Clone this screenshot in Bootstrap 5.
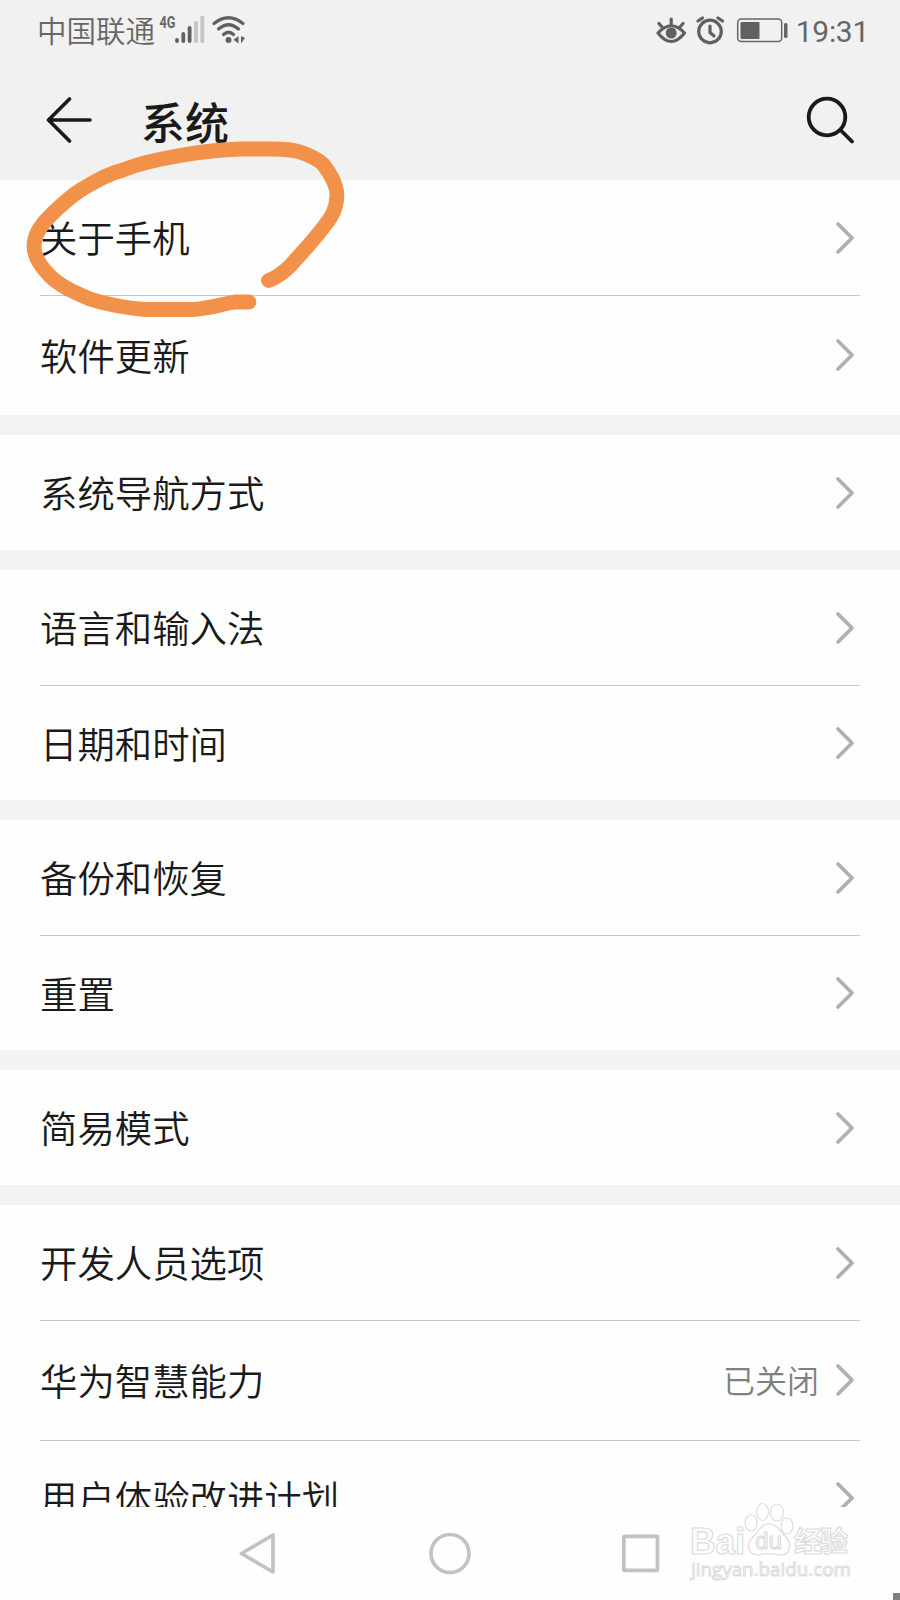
<!DOCTYPE html>
<html lang="zh-CN">
<head>
<meta charset="utf-8">
<meta name="viewport" content="width=device-width, initial-scale=1">
<title>系统</title>
<link href="https://cdn.jsdelivr.net/npm/bootstrap@5.3.0/dist/css/bootstrap.min.css" rel="stylesheet">
<style>
body{font-family:"Noto Sans CJK SC",sans-serif;background:#fefefe;color:#1a1a1a;width:900px;height:1600px;overflow:hidden}
svg{display:block;flex:none}
.top-area{height:180px;background:#f1f1f1}
.status-bar{height:62px;padding:0 31px 0 37px;color:#666}
.carrier{font-size:29.5px;font-weight:350;height:62px;line-height:59px}
.clock{font-family:Roboto,sans-serif;font-size:30px;line-height:62px;letter-spacing:-.3px;padding-top:1px}
.title-bar{height:118px;padding:0 46px 2px}
.title-text{font-size:44px;font-weight:500;line-height:60px;margin:1px 0 0 48px}
.settings{height:1327px;overflow:hidden}
.group-gap{height:20px;background:#f3f3f3}
.set-row{height:115px;margin:0 40px;padding-right:5px;font-size:37.4px;font-weight:350;line-height:54px}
.set-row>span{padding-bottom:1px}
.set-row+.set-row{border-top:1px solid #c8c8c8}
.set-row.tall{height:120px}
.set-row.tall svg{margin-bottom:2px}
.set-row.last-row>span{padding-bottom:3px}
.set-row .state{font-size:32px;color:#808080;margin-right:16px;padding-bottom:3px}
.nav-keys{height:93px}
.pen-mark{left:0;top:120px}
.watermark{left:680px;top:1496px}
.corner{right:0;bottom:0;width:7px;height:7px;background:#808080}
</style>
</head>
<body class="position-relative">
<svg width="0" height="0" class="position-absolute"><symbol id="chev" viewBox="0 0 20 34"><path d="M3 3 17 17 3 31" fill="none" stroke="#b0b0b0" stroke-width="3.800" stroke-linecap="round" stroke-linejoin="round"/></symbol></svg>
<header class="top-area">
  <div class="status-bar d-flex align-items-center justify-content-between">
    <div class="d-flex align-items-center">
      <span class="carrier">中国联通</span>
      <svg width="92" height="62" viewBox="155 0 92 62">
        <text x="159.500" y="28" font-family="Roboto" font-weight="700" font-size="16" textLength="16" lengthAdjust="spacingAndGlyphs" fill="#666">4G</text>
        <g stroke="#606060" stroke-width="3.800" stroke-linecap="round"><path d="M177 40v1M183.300 34v7M189.600 28v13"/><path d="M196 23v18M202.300 17.500v23.500" stroke="#c4c4c4"/></g>
        <g fill="none" stroke="#606060" stroke-width="3.200" stroke-linecap="round"><path d="M214 23.500Q228.500 12 243 23.500M218.500 29Q228.500 20.500 238.500 29M223.500 34.500Q228.500 30 233.500 34.500"/></g>
        <circle cx="228.500" cy="40" r="3" fill="#606060"/><path d="M238.500 36v7.500l-5-3.800zM241 36v7.500l4-5.500z" fill="#606060"/>
      </svg>
    </div>
    <div class="d-flex align-items-center">
      <svg width="140" height="62" viewBox="655.500 0 140 62">
        <g fill="none" stroke="#606060" stroke-width="3.200" stroke-linecap="round" stroke-linejoin="round"><path d="M657.500 33Q670.700 18.500 684 33Q670.700 50 657.500 33zM658.500 23.500l3 3.500M670.700 19v5M682.500 23.500l-3 3.500"/><circle cx="709.500" cy="31.500" r="11.300"/><path d="M709.500 26v6.500l4 3.500M697.500 21l4.500-3M717.500 18l4.500 3"/></g>
        <circle cx="670.700" cy="33" r="5.500" fill="#606060"/>
        <rect x="737.200" y="19" width="44" height="22.500" rx="3.500" fill="none" stroke="#666" stroke-width="1.500"/><rect x="740" y="22" width="19" height="17" rx="1" fill="#606060"/><rect x="783.500" y="23" width="3.500" height="15" rx="1.500" fill="#666"/>
      </svg>
      <span class="clock">19:31</span>
    </div>
  </div>
  <div class="title-bar d-flex align-items-center">
    <svg width="47" height="48" viewBox="46 96 47 48"><path d="M69.500 99 48.500 120 69.500 141M49 120H90" fill="none" stroke="#1a1a1a" stroke-width="3.600" stroke-linecap="round" stroke-linejoin="round"/></svg>
    <h1 class="title-text">系统</h1>
    <svg class="ms-auto" width="49" height="50" viewBox="805 95 49 50"><g fill="none" stroke="#1a1a1a" stroke-width="3.800" stroke-linecap="round"><circle cx="827" cy="117" r="18.300"/><path d="M840.500 130 852 141.500"/></g></svg>
  </div>
</header>
<main class="settings">
  <section>
    <div class="set-row d-flex align-items-center justify-content-between"><span>关于手机</span><svg width="20" height="34"><use href="#chev"/></svg></div>
    <div class="set-row tall d-flex align-items-center justify-content-between"><span>软件更新</span><svg width="20" height="34"><use href="#chev"/></svg></div>
  </section>
  <div class="group-gap"></div>
  <section>
    <div class="set-row d-flex align-items-center justify-content-between"><span>系统导航方式</span><svg width="20" height="34"><use href="#chev"/></svg></div>
  </section>
  <div class="group-gap"></div>
  <section>
    <div class="set-row d-flex align-items-center justify-content-between"><span>语言和输入法</span><svg width="20" height="34"><use href="#chev"/></svg></div>
    <div class="set-row d-flex align-items-center justify-content-between"><span>日期和时间</span><svg width="20" height="34"><use href="#chev"/></svg></div>
  </section>
  <div class="group-gap"></div>
  <section>
    <div class="set-row d-flex align-items-center justify-content-between"><span>备份和恢复</span><svg width="20" height="34"><use href="#chev"/></svg></div>
    <div class="set-row d-flex align-items-center justify-content-between"><span>重置</span><svg width="20" height="34"><use href="#chev"/></svg></div>
  </section>
  <div class="group-gap"></div>
  <section>
    <div class="set-row d-flex align-items-center justify-content-between"><span>简易模式</span><svg width="20" height="34"><use href="#chev"/></svg></div>
  </section>
  <div class="group-gap"></div>
  <section>
    <div class="set-row d-flex align-items-center justify-content-between"><span>开发人员选项</span><svg width="20" height="34"><use href="#chev"/></svg></div>
    <div class="set-row tall d-flex align-items-center"><span>华为智慧能力</span><span class="state ms-auto">已关闭</span><svg width="20" height="34"><use href="#chev"/></svg></div>
    <div class="set-row last-row d-flex align-items-center justify-content-between"><span>用户体验改进计划</span><svg width="20" height="34"><use href="#chev"/></svg></div>
  </section>
</main>
<nav class="nav-keys">
  <svg width="900" height="93" viewBox="0 1507 900 93" fill="none" stroke="#c2c2c2" stroke-width="3.700" stroke-linejoin="round"><path d="M241.500 1553.500 273 1535V1572z"/><circle cx="450" cy="1553.500" r="19"/><rect x="623.800" y="1536.300" width="33.700" height="34" rx="1"/></svg>
</nav>
<svg class="pen-mark position-absolute" width="360" height="210" viewBox="0 120 360 210"><path d="M268.500 280.500C276 278 283 273 290 266L308 246C318 234 329 222 333 213C337 204 338 197 336 188C334 180 329 172 323 164C316 158 309 155 300 152C292 149.500 284 149 272 149H240C220 149.500 200 152 180 155.500C160 159 140 163 123 170C108 174 98 180 84 188C70 196 58 208 49 217C39 227 34 238 34 246C34 257 42 268 50 276C60 286 74 292 90 299C106 304 126 308 145 309.500H192C208 309 222 304 235 302H249" fill="none" stroke="#f1914a" stroke-width="14.800" stroke-linecap="round" stroke-linejoin="round"/></svg>
<svg class="watermark position-absolute" width="180" height="90" viewBox="680 1496 180 90" fill="#fefefe" stroke="#dcdcdc" stroke-width="1.200">
  <text x="690" y="1554" font-size="36" font-family="Liberation Sans" font-weight="700" textLength="55" lengthAdjust="spacingAndGlyphs">Bai</text><text x="794" y="1552" font-size="28" font-family="Noto Sans CJK SC" font-weight="700" textLength="54">经验</text>
  <ellipse cx="751" cy="1523" rx="6" ry="8"/><ellipse cx="762.500" cy="1512" rx="6" ry="8.500"/><ellipse cx="777" cy="1512.500" rx="6.500" ry="8.500"/><ellipse cx="787" cy="1526" rx="6" ry="8"/>
  <path d="M769 1524C760 1524 759 1532 753 1537C745 1545 748 1555 759 1555C766 1553 772 1553 779 1555C791 1556 792 1544 786 1537C779 1531 778 1524 769 1524z"/>
  <text x="755" y="1549" font-size="24" font-family="Liberation Sans" textLength="27" lengthAdjust="spacingAndGlyphs">du</text>
  <text x="691" y="1575.500" font-size="19" font-family="Open Sans" textLength="160" lengthAdjust="spacingAndGlyphs" stroke-width="1">jingyan.baidu.com</text>
</svg>
<div class="corner position-absolute"></div>
<script src="https://cdn.jsdelivr.net/npm/bootstrap@5.3.0/dist/js/bootstrap.bundle.min.js"></script>
</body>
</html>
